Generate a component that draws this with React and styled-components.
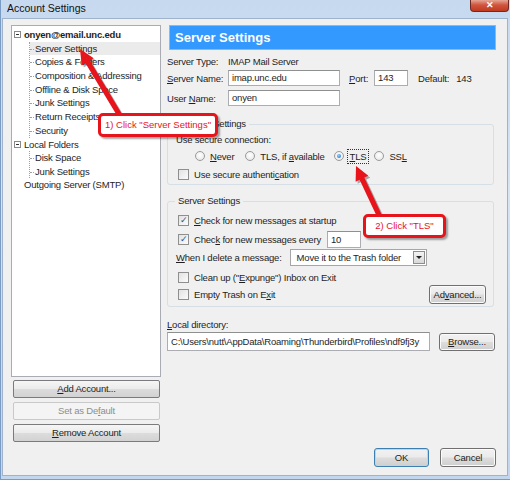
import styled, { createGlobalStyle } from 'styled-components'

const Global = createGlobalStyle`
  html, body { margin: 0; padding: 0; }
  body {
    width: 510px;
    height: 480px;
    overflow: hidden;
    font-family: "Liberation Sans", Arial, sans-serif;
    font-size: 9.5px;
    letter-spacing: -0.2px;
    color: #1e1e1e;
  }
  u { text-decoration: underline; text-underline-offset: 1px; }
`

const Window = styled.div`
  position: relative;
  width: 510px;
  height: 480px;
  box-sizing: border-box;
  display: flex;
  flex-direction: column;
  background: linear-gradient(180deg, #c6d9ef 0%, #d6e4f4 40%, #c2d6ee 100%);
  border-left: 1px solid #7a9cc4;
  border-bottom: 1px solid #7a9cc4;
`

const TitleBar = styled.div`
  height: 18px;
  display: flex;
  justify-content: space-between;
  align-items: flex-start;
  padding-left: 6px;
`

const Title = styled.span`
  font-size: 10.5px;
  letter-spacing: 0;
  line-height: 16px;
  color: #111;
`

const CloseBtn = styled.div`
  width: 37px;
  height: 11px;
  margin-right: 1px;
  border: 1px solid #6d2a24;
  border-top: none;
  border-radius: 0 0 4px 4px;
  background: linear-gradient(180deg, #e7a594 0%, #d0553f 45%, #c0391f 100%);
  color: #fff;
  font-size: 9px;
  font-weight: bold;
  line-height: 10px;
  text-align: center;
`

const Client = styled.div`
  flex: 1;
  margin: 0 2px 3px 1px;
  background: #f0f0f0;
  border: 1px solid #9fb3cc;
  display: flex;
`

const LeftCol = styled.div`
  width: 150px;
  margin: 6px 0 0 8px;
  display: flex;
  flex-direction: column;
`

const Tree = styled.div`
  height: 352px;
  background: #fff;
  border: 1px solid #a9acb2;
  padding-top: 2px;
  box-sizing: border-box;
`

const TreeRow = styled.div`
  height: 13.7px;
  line-height: 13.7px;
  display: flex;
  align-items: center;
  padding-left: ${(p) => p.indent}px;
  font-weight: ${(p) => (p.bold ? 'bold' : 'normal')};
  white-space: nowrap;
`

const Branch = styled.div`
  margin-left: 17px;
  border-left: 1px dotted #a0a0a0;
  height: ${(p) => p.h}px;
`

const Child = styled.div`
  position: relative;
  height: 13.7px;
  line-height: 13.7px;
  padding-left: 5px;
  white-space: nowrap;
  background: ${(p) => (p.selected ? '#ebebeb' : 'transparent')};
  &::before {
    content: '';
    position: absolute;
    left: 0;
    top: 7px;
    width: 4px;
    border-top: 1px dotted #a0a0a0;
  }
`

const Toggle = styled.span`
  display: inline-block;
  width: 7px;
  height: 7px;
  border: 1px solid #8a8a8a;
  margin: 0 3px 0 2px;
  position: relative;
  box-sizing: border-box;
  &::after {
    content: '';
    position: absolute;
    left: 1px;
    right: 1px;
    top: 2px;
    border-top: 1px solid #333;
  }
`

const SideButton = styled.div`
  height: 18px;
  margin: ${(p) => (p.first ? 3 : 4)}px 0 0 2px;
  width: 147px;
  box-sizing: border-box;
  border: 1px solid ${(p) => (p.disabled ? '#c9c9c9' : '#7b7b7b')};
  border-radius: 2px;
  background: ${(p) =>
    p.disabled ? '#f4f4f4' : 'linear-gradient(180deg, #f6f6f6 0%, #ebebeb 48%, #dcdcdc 52%, #d2d2d2 100%)'};
  color: ${(p) => (p.disabled ? '#8d8d8d' : '#1e1e1e')};
  text-align: center;
  line-height: 16px;
`

const RightCol = styled.div`
  width: 329px;
  margin: 6px 0 0 6px;
  display: flex;
  flex-direction: column;
`

const Header = styled.div`
  height: 25px;
  margin-left: 2px;
  background: #3399ff;
  border: 1px solid #b0b0b0;
  box-sizing: border-box;
  color: #fff;
  font-weight: bold;
  font-size: 13px;
  letter-spacing: 0;
  line-height: 23px;
  padding-left: 5px;
`

const FormRow = styled.div`
  display: flex;
  align-items: center;
  height: ${(p) => p.h}px;
  margin-top: ${(p) => p.mt || 0}px;
  white-space: nowrap;
`

const Label = styled.span`
  width: ${(p) => (p.w ? `${p.w}px` : 'auto')};
  flex: none;
  margin-left: ${(p) => p.ml || 0}px;
`

const Spacer = styled.span`
  flex: 1;
`

const Input = styled.div`
  width: ${(p) => p.w}px;
  height: ${(p) => p.h || 16}px;
  flex: none;
  box-sizing: border-box;
  border: 1px solid #abadb3;
  border-top-color: #8e8f8f;
  background: #fff;
  padding-left: 3px;
  line-height: ${(p) => (p.h || 16) - 2}px;
  overflow: hidden;
  white-space: nowrap;
  margin-left: ${(p) => p.ml || 0}px;
`

const Fieldset = styled.fieldset`
  margin: ${(p) => p.mt}px 2px 0 0;
  padding: ${(p) => p.pt}px 0 ${(p) => p.pb}px 8px;
  border: 1px solid #d5dfe5;
  border-radius: 3px;
  min-width: 0;
`

const Legend = styled.legend`
  padding: 0 3px;
  margin-left: -1px;
  line-height: 12px;
  font-size: 9.5px;
`

const Radio = styled.span`
  width: 10px;
  height: 10px;
  border-radius: 50%;
  flex: none;
  box-sizing: border-box;
  border: 1px solid #9a9a9a;
  background: radial-gradient(circle at 50% 40%, #ffffff 0%, #e4e4e4 100%);
  margin: 0 5px 0 ${(p) => p.ml || 0}px;
  position: relative;
  &::after {
    content: '';
    display: ${(p) => (p.checked ? 'block' : 'none')};
    position: absolute;
    left: 2px;
    top: 2px;
    width: 4px;
    height: 4px;
    border-radius: 50%;
    background: radial-gradient(circle at 40% 35%, #8fd0ff 0%, #1b6bb5 100%);
  }
`

const Focus = styled.span`
  outline: 1px dotted #333;
  outline-offset: 1px;
  padding: 0 1px;
`

const Check = styled.span`
  width: 11px;
  height: 11px;
  flex: none;
  box-sizing: border-box;
  border: 1px solid #8f8f8f;
  background: linear-gradient(135deg, #e2e2e2 0%, #fbfbfb 100%);
  margin: 0 5px 0 2px;
  font-size: 9px;
  line-height: 9px;
  text-align: center;
  color: #2d4f91;
`

const Select = styled.div`
  width: 137px;
  height: 17px;
  flex: none;
  margin-left: 8px;
  box-sizing: border-box;
  border: 1px solid #a6a6a6;
  background: #fff;
  display: flex;
  align-items: center;
  padding-left: 6px;
  justify-content: space-between;
`

const DropArrow = styled.span`
  width: 12px;
  height: 13px;
  margin-right: 1px;
  border: 1px solid #8d8d8d;
  box-sizing: border-box;
  background: linear-gradient(180deg, #f4f4f4, #d8d8d8);
  display: flex;
  align-items: center;
  justify-content: center;
  &::after {
    content: '';
    border-left: 3px solid transparent;
    border-right: 3px solid transparent;
    border-top: 3px solid #222;
  }
`

const Button = styled.div`
  width: ${(p) => p.w}px;
  height: ${(p) => p.h || 19}px;
  flex: none;
  box-sizing: border-box;
  margin-left: ${(p) => p.ml || 0}px;
  margin-right: ${(p) => p.mr || 0}px;
  border: 1px solid ${(p) => (p.focused ? '#3c7fb1' : '#707070')};
  box-shadow: ${(p) => (p.focused ? 'inset 0 0 0 1px #a9dcf7' : 'inset 0 0 0 1px #fbfbfb')};
  border-radius: 3px;
  background: linear-gradient(180deg, #f2f2f2 0%, #ebebeb 48%, #dddddd 52%, #cfcfcf 100%);
  text-align: center;
  line-height: ${(p) => (p.h || 19) - 2}px;
`

const Footer = styled.div`
  margin-top: auto;
  margin-bottom: 8px;
  display: flex;
  justify-content: flex-end;
  gap: 11px;
`

const Callout = styled.div`
  position: absolute;
  left: ${(p) => p.x}px;
  top: ${(p) => p.y}px;
  width: ${(p) => p.w}px;
  height: 24px;
  box-sizing: border-box;
  border: 3px solid #e8141b;
  border-radius: 5px;
  background: #fff;
  box-shadow: 2px 2px 2px rgba(0, 0, 0, 0.35);
  color: #e8141b;
  font-size: 9.5px;
  letter-spacing: 0;
  line-height: 18px;
  text-align: center;
  white-space: nowrap;
`

const Overlay = styled.svg`
  position: absolute;
  left: 0;
  top: 0;
  pointer-events: none;
`

function Arrow({ tip, tail, head = 15, half = 7, shaft = 2.6 }) {
  const dx = tail[0] - tip[0]
  const dy = tail[1] - tip[1]
  const len = Math.hypot(dx, dy)
  const ux = dx / len
  const uy = dy / len
  const px = -uy
  const py = ux
  const bx = tip[0] + ux * head
  const by = tip[1] + uy * head
  const pts = [
    [tip[0], tip[1]],
    [bx + px * half, by + py * half],
    [bx + px * shaft, by + py * shaft],
    [tail[0] + px * shaft, tail[1] + py * shaft],
    [tail[0] - px * shaft, tail[1] - py * shaft],
    [bx - px * shaft, by - py * shaft],
    [bx - px * half, by - py * half],
  ]
    .map((p) => p.join(','))
    .join(' ')
  return (
    <>
      <polygon points={pts} fill="rgba(0,0,0,0.3)" transform="translate(2,2)" />
      <polygon points={pts} fill="#e8141b" />
    </>
  )
}

export default function App() {
  return (
    <>
      <Global />
      <Window>
        <TitleBar>
          <Title>Account Settings</Title>
          <CloseBtn>✕</CloseBtn>
        </TitleBar>
        <Client>
          <LeftCol>
            <Tree>
              <TreeRow indent={0} bold>
                <Toggle />onyen@email.unc.edu
              </TreeRow>
              <Branch h={96}>
                <Child selected>Server Settings</Child>
                <Child>Copies &amp; Folders</Child>
                <Child>Composition &amp; Addressing</Child>
                <Child>Offline &amp; Disk Space</Child>
                <Child>Junk Settings</Child>
                <Child>Return Receipts</Child>
                <Child>Security</Child>
              </Branch>
              <TreeRow indent={0}>
                <Toggle />Local Folders
              </TreeRow>
              <Branch h={27}>
                <Child>Disk Space</Child>
                <Child>Junk Settings</Child>
              </Branch>
              <TreeRow indent={12}>Outgoing Server (SMTP)</TreeRow>
            </Tree>
            <SideButton first>
              <u>A</u>dd Account...
            </SideButton>
            <SideButton disabled>
              Set as De<u>f</u>ault
            </SideButton>
            <SideButton>
              <u>R</u>emove Account
            </SideButton>
          </LeftCol>

          <RightCol>
            <Header>Server Settings</Header>
            <FormRow h={14} mt={4}>
              <Label w={61}>Server Type:</Label>
              <span>IMAP Mail Server</span>
            </FormRow>
            <FormRow h={16} mt={2}>
              <Label w={61}>
                <u>S</u>erver Name:
              </Label>
              <Input w={112}>imap.unc.edu</Input>
              <Label ml={9}>
                <u>P</u>ort:
              </Label>
              <Input w={34} ml={6}>
                143
              </Input>
              <Label ml={10}>Default:</Label>
              <Label ml={7}>143</Label>
            </FormRow>
            <FormRow h={16} mt={4}>
              <Label w={61}>
                User <u>N</u>ame:
              </Label>
              <Input w={112}>onyen</Input>
            </FormRow>

            <Fieldset mt={12} pt={2} pb={3}>
              <Legend>Security Settings</Legend>
              <FormRow h={14}>
                <span>Use secure connection:</span>
              </FormRow>
              <FormRow h={16} mt={2}>
                <Radio ml={19} />
                <span>
                  <u>N</u>ever
                </span>
                <Radio ml={11} />
                <span>
                  TLS, if <u>a</u>vailable
                </span>
                <Radio ml={9} checked />
                <Focus>
                  <u>T</u>LS
                </Focus>
                <Radio ml={7} />
                <span>
                  SS<u>L</u>
                </span>
              </FormRow>
              <FormRow h={14} mt={3}>
                <Check />
                <span>
                  Use secure authenti<u>c</u>ation
                </span>
              </FormRow>
            </Fieldset>

            <Fieldset mt={10} pt={6} pb={2}>
              <Legend>Server Settings</Legend>
              <FormRow h={14}>
                <Check>✓</Check>
                <span>
                  <u>C</u>heck for new messages at startup
                </span>
              </FormRow>
              <FormRow h={17} mt={4}>
                <Check>✓</Check>
                <span>
                  Chec<u>k</u> for new messages every
                </span>
                <Input w={34} h={17} ml={6}>
                  10
                </Input>
              </FormRow>
              <FormRow h={17} mt={1}>
                <span>
                  <u>W</u>hen I delete a message:
                </span>
                <Select>
                  <span>Move it to the Trash folder</span>
                  <DropArrow />
                </Select>
              </FormRow>
              <FormRow h={13} mt={5}>
                <Check />
                <span>
                  Clean up ("<u>E</u>xpunge") Inbox on Exit
                </span>
              </FormRow>
              <FormRow h={19} mt={1}>
                <Check />
                <span>
                  Empty Trash on E<u>x</u>it
                </span>
                <Spacer />
                <Button w={57} mr={7}>
                  Ad<u>v</u>anced...
                </Button>
              </FormRow>
            </Fieldset>

            <FormRow h={14} mt={10}>
              <span>
                <u>L</u>ocal directory:
              </span>
            </FormRow>
            <FormRow h={19} mt={1}>
              <Input w={263} h={19}>
                C:\Users\nutt\AppData\Roaming\Thunderbird\Profiles\ndf9fj3y
              </Input>
              <Button w={56} h={18} ml={9}>
                <u>B</u>rowse...
              </Button>
            </FormRow>

            <Footer>
              <Button w={55} focused>
                OK
              </Button>
              <Button w={56}>Cancel</Button>
            </Footer>
          </RightCol>
        </Client>

        <Overlay width="510" height="480">
          <Arrow tip={[79, 49]} tail={[118, 114]} />
          <Arrow tip={[355, 166]} tail={[378, 215]} head={14} />
        </Overlay>
        <Callout x={97} y={113} w={120}>
          1) Click "Server Settings"
        </Callout>
        <Callout x={362} y={214} w={83}>
          2) Click "TLS"
        </Callout>
      </Window>
    </>
  )
}
